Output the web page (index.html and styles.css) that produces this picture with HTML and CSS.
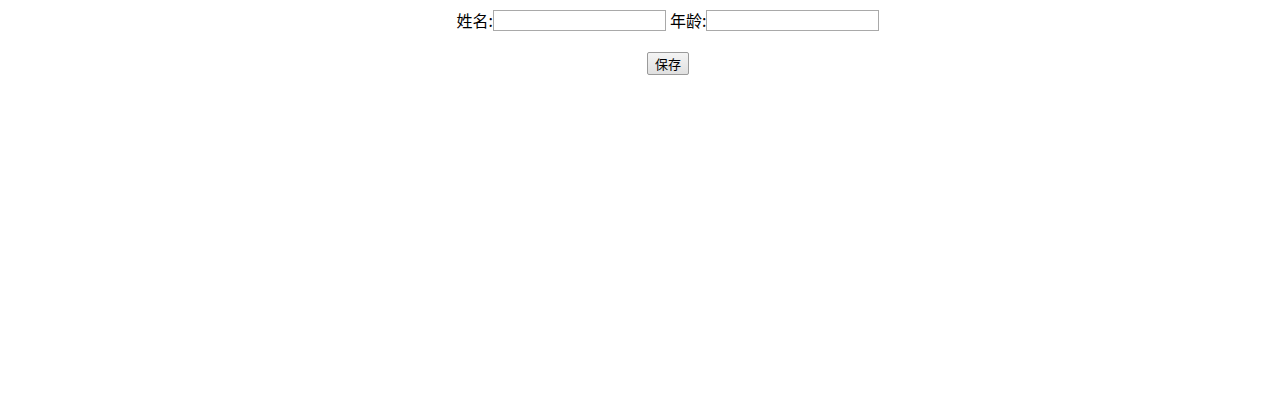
FILE: index.html
```html
<!DOCTYPE html>
<html lang="zh">
<head>
<meta charset="utf-8">
<title>保存</title>
<link rel="stylesheet" href="styles.css">
</head>
<body>
<form class="form">
  <div class="row">
    <label class="field"><span class="label">姓名:</span><input class="input" type="text"></label>
    <label class="field"><span class="label">年龄:</span><input class="input" type="text"></label>
  </div>
  <div class="actions">
    <button class="btn" type="button">保存</button>
  </div>
</form>
</body>
</html>
```
FILE: styles.css
```css
body {
  margin: 8px;
  font-family: "Noto Sans CJK SC", "Microsoft YaHei", sans-serif;
  font-size: 16px;
  color: #000;
  background: #fff;
}
.form {
  margin: 0 0 0 62px;
}
.row {
  display: flex;
  justify-content: center;
  align-items: center;
  gap: 4px;
  height: 21px;
  margin-top: 2px;
}
.field {
  display: flex;
  align-items: center;
}
.label {
  line-height: 21px;
}
.input {
  box-sizing: border-box;
  width: 173px;
  height: 21px;
  margin: 0;
  padding: 1px 2px;
  border: 1px solid #a9a9a9;
  background: #fff;
  font: 13px "Noto Sans CJK SC", sans-serif;
}
.actions {
  display: flex;
  justify-content: center;
  margin-top: 21px;
}
.btn {
  box-sizing: border-box;
  width: 42px;
  height: 23px;
  margin: 0;
  padding: 0;
  border: 1px solid #9a9a9a;
  border-radius: 2px;
  background: linear-gradient(#f4f4f4, #e0e0e0);
  font: 13px/21px "Noto Sans CJK SC", sans-serif;
  color: #000;
}
```
